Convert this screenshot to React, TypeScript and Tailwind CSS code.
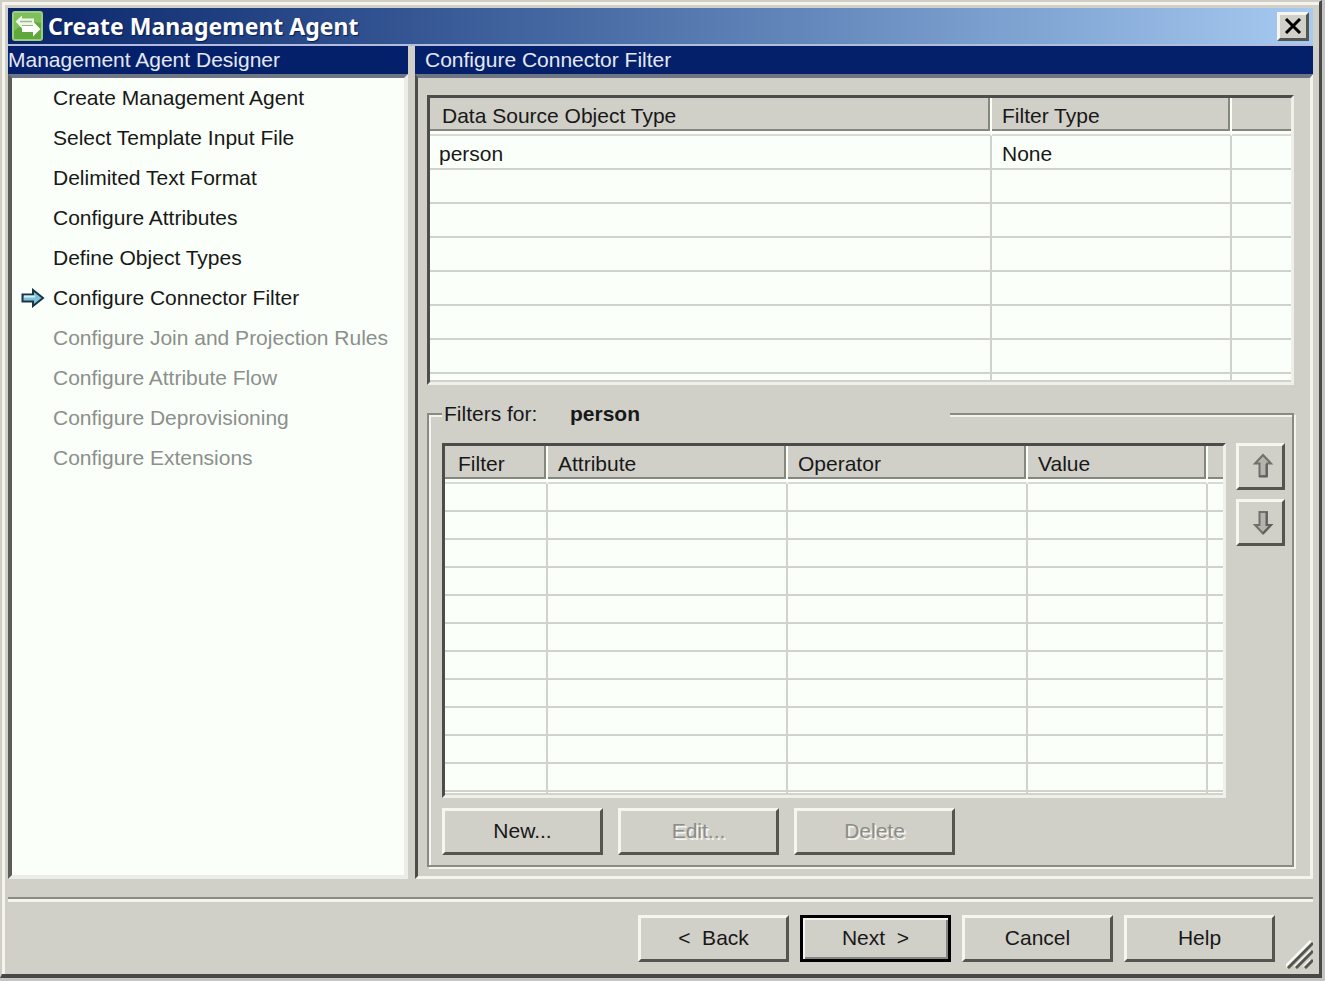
import React from 'react';
import clsx from 'clsx';

const steps = [
  { label: 'Create Management Agent' },
  { label: 'Select Template Input File' },
  { label: 'Delimited Text Format' },
  { label: 'Configure Attributes' },
  { label: 'Define Object Types' },
  { label: 'Configure Connector Filter', current: true },
  { label: 'Configure Join and Projection Rules', pending: true },
  { label: 'Configure Attribute Flow', pending: true },
  { label: 'Configure Deprovisioning', pending: true },
  { label: 'Configure Extensions', pending: true },
];

const raised = 'border-[3px] border-t-[#f6f6f0] border-l-[#f6f6f0] border-r-[#55554f] border-b-[#55554f] bg-[#d0cfc8]';
const sunken = 'border-[3px] border-t-[#4c4c4a] border-l-[#4c4c4a] border-r-[#f0f0ea] border-b-[#f0f0ea]';

const WinButton: React.FC<React.ButtonHTMLAttributes<HTMLButtonElement>> = ({ className, disabled, ...props }) => (
  <button
    type="button"
    disabled={disabled}
    className={clsx(
      'flex h-[47px] items-center justify-center whitespace-pre pb-[2px]',
      disabled && 'text-[#8e8d88] [text-shadow:2px_2px_0_#f4f4ee]',
      className,
    )}
    {...props}
  />
);

const HeaderCell: React.FC<{ children?: React.ReactNode; className?: string }> = ({ children, className }) => (
  <th
    scope="col"
    className={clsx(
      'border-b-2 border-r-2 border-b-[#d8dad4] border-r-[#fafff8] bg-[#d0cfc8] p-0 text-left font-normal last:border-r-0',
      'shadow-[inset_0_-3px_0_#fafff8,inset_-2px_-5px_0_#868680] last:shadow-[inset_0_-3px_0_#fafff8,inset_0_-5px_0_#868680]',
      className,
    )}
  >
    {children}
  </th>
);

const Cell: React.FC<{ children?: React.ReactNode; className?: string }> = ({ children, className }) => (
  <td className={clsx('border-b-2 border-r-2 border-[#d0d2cc] p-0 last:border-r-0', className)}>{children}</td>
);

const TitleBar: React.FC = () => (
  <header className="flex h-9 items-center bg-linear-to-r from-[#0a246a] to-[#a6caf0] px-1">
    <svg className="h-[30px] w-[31px] shrink-0" viewBox="0 0 31 30" aria-hidden="true">
      <rect x="1" y="1" width="29" height="28" rx="2" fill="#5fa83c" stroke="#9ccf7c" strokeWidth="2" />
      <path d="M2 2h27v10Q15 9 2 20z" fill="#8cc868" opacity=".7" />
      <path d="M3.500 10.500L10 4.500v3h12v7H10v3z" fill="#eef6e6" />
      <path d="M28.500 18L21 10.500v4H10V21h11v4.500z" fill="#fff" />
      <path d="M8 10.500h12" stroke="#a4b49a" strokeWidth="1.500" />
      <path d="M10 14.500h11" stroke="#8fb87a" strokeWidth="1" />
    </svg>
    <h1 className="ml-[5px] flex-1 font-['Noto_Sans',sans-serif] text-[23px] leading-8 font-bold text-white [text-shadow:1px_1px_1px_#0a1c50]">
      Create Management Agent
    </h1>
    <button type="button" aria-label="Close" className={clsx(raised, 'flex h-[29px] w-8 items-center justify-center')}>
      <svg className="h-4 w-[18px]" viewBox="0 0 18 16" aria-hidden="true">
        <path d="M2 1l14 14M16 1L2 15" stroke="#000" strokeWidth="3" />
      </svg>
    </button>
  </header>
);

const StepList: React.FC = () => (
  <nav className="flex w-[400px] shrink-0 flex-col">
    <h2 className="h-7 bg-[#04206a] leading-7 text-[#e4e8f4]">Management Agent Designer</h2>
    <ol className="flex-1 border-4 border-t-[#6e7684] border-r-[#ecece8] border-b-[#ecece8] border-l-[#5c5c5a] bg-[#fafff9]">
      {steps.map((step) => (
        <li
          key={step.label}
          aria-current={step.current ? 'step' : undefined}
          className={clsx('flex h-10 items-center pl-[9px]', step.pending && 'text-[#8c8f8c]')}
        >
          <span className="w-8 shrink-0">
            {step.current && (
              <svg className="h-5 w-6" viewBox="0 0 24 20" aria-hidden="true">
                <path d="M1.500 6.500H12V2l10 8-10 8v-4.500H1.500z" fill="#7cc4dc" stroke="#1c3444" strokeWidth="2" />
                <path d="M3 8.500h11" stroke="#d4f0f8" strokeWidth="2" />
              </svg>
            )}
          </span>
          {step.label}
        </li>
      ))}
    </ol>
  </nav>
);

const ObjectTypeTable: React.FC = () => (
  <div className={clsx(sunken, 'bg-[#fafff9]')}>
    <table className="w-full table-fixed border-separate border-spacing-0">
      <colgroup>
        <col className="w-[562px]" />
        <col className="w-[240px]" />
        <col />
      </colgroup>
      <thead>
        <tr className="h-[38px]">
          <HeaderCell className="pl-3">Data Source Object Type</HeaderCell>
          <HeaderCell className="pl-[10px]">Filter Type</HeaderCell>
          <HeaderCell />
        </tr>
      </thead>
      <tbody>
        <tr className="h-[34px]">
          <Cell className="pt-[3px] pl-[9px]">person</Cell>
          <Cell className="pt-[3px] pl-[10px]">None</Cell>
          <Cell />
        </tr>
        {Array.from({ length: 6 }, (_, i) => (
          <tr key={i} className="h-[34px]">
            <Cell />
            <Cell />
            <Cell />
          </tr>
        ))}
        <tr className="h-2">
          <Cell />
          <Cell />
          <Cell />
        </tr>
      </tbody>
    </table>
  </div>
);

const FilterTable: React.FC = () => (
  <div className={clsx(sunken, 'min-w-0 flex-1 bg-[#fafff9]')}>
    <table className="w-full table-fixed border-separate border-spacing-0">
      <colgroup>
        <col className="w-[103px]" />
        <col className="w-[240px]" />
        <col className="w-[240px]" />
        <col className="w-[180px]" />
        <col />
      </colgroup>
      <thead>
        <tr className="h-[38px]">
          <HeaderCell className="pl-[13px]">Filter</HeaderCell>
          <HeaderCell className="pl-[10px]">Attribute</HeaderCell>
          <HeaderCell className="pl-[10px]">Operator</HeaderCell>
          <HeaderCell className="pl-[10px]">Value</HeaderCell>
          <HeaderCell />
        </tr>
      </thead>
      <tbody>
        {Array.from({ length: 11 }, (_, i) => (
          <tr key={i} className="h-7">
            <Cell />
            <Cell />
            <Cell />
            <Cell />
            <Cell />
          </tr>
        ))}
        <tr className="h-[3px]">
          <Cell />
          <Cell />
          <Cell />
          <Cell />
          <Cell />
        </tr>
      </tbody>
    </table>
  </div>
);

const ArrowIcon: React.FC = () => (
  <svg className="h-[26px] w-[22px]" viewBox="0 0 22 26" aria-hidden="true">
    <path d="M11 2l8 8.500h-4V23H7.500V10.500H3z" fill="#b4b4ae" stroke="#70706c" strokeWidth="2" />
    <path d="M14.500 11v12.500H7" fill="none" stroke="#60605c" strokeWidth="2" />
  </svg>
);

const ArrowDownIcon: React.FC = () => (
  <svg className="h-[26px] w-[22px]" viewBox="0 0 22 26" aria-hidden="true">
    <path d="M11 24.500L3 16h4.500V3H15v13h4z" fill="#b4b4ae" stroke="#70706c" strokeWidth="2" />
    <path d="M14.500 3v13h4.500l-8 8.500" fill="none" stroke="#60605c" strokeWidth="2" />
  </svg>
);

const FilterPanel: React.FC = () => (
  <div className="flex min-w-0 flex-1 flex-col">
    <h2 className="h-7 bg-[#04206a] pl-[10px] leading-7 text-[#e4e8f4]">Configure Connector Filter</h2>
    <div className="flex-1 border-[3px] border-t-4 border-t-[#6e7684] border-r-[#f4f4ee] border-b-[#f4f4ee] border-l-[#4c4c4a] pt-[17px] pr-4 pb-2 pl-[9px]">
      <ObjectTypeTable />
      <fieldset className="mt-[14px] border-2 border-[#8a8a84] px-[13px] pb-[10px] shadow-[2px_2px_0_#f4f4ee,inset_2px_2px_0_#f4f4ee]">
        <legend className="w-[508px] bg-[#d0cfc8] pl-[2px]">
          <div className="flex h-[30px] items-center">
            <span className="w-[126px]">Filters for:</span>
            <b>person</b>
          </div>
        </legend>
        <div className="mt-[14px] flex items-start gap-[10px]">
          <FilterTable />
          <div className="-mr-[6px] flex flex-col gap-[9px]">
            <WinButton disabled aria-label="Move up" className={clsx(raised, 'w-[49px] pl-1')}>
              <ArrowIcon />
            </WinButton>
            <WinButton disabled aria-label="Move down" className={clsx(raised, 'w-[49px] pl-1')}>
              <ArrowDownIcon />
            </WinButton>
          </div>
        </div>
        <div className="mt-[10px] flex gap-[15px]">
          <WinButton className={clsx(raised, 'w-[161px]')}>New...</WinButton>
          <WinButton disabled className={clsx(raised, 'w-[161px]')}>Edit...</WinButton>
          <WinButton disabled className={clsx(raised, 'w-[161px]')}>Delete</WinButton>
        </div>
      </fieldset>
    </div>
  </div>
);

const Footer: React.FC = () => (
  <footer className="mt-[18px] border-t-2 border-[#8a8a84] shadow-[inset_0_3px_0_#f4f4ee]">
    <div className="flex items-start justify-end gap-[11px] pt-4">
      <WinButton className={clsx(raised, 'w-[151px]')}>{'<  Back'}</WinButton>
      <WinButton className="w-[151px] border-[3px] border-black bg-[#d0cfc8] shadow-[inset_2px_2px_0_#f4f4ee,inset_-2px_-2px_0_#868680]">
        {'Next  >'}
      </WinButton>
      <WinButton className={clsx(raised, 'w-[151px]')}>Cancel</WinButton>
      <WinButton className={clsx(raised, 'w-[151px]')}>Help</WinButton>
      <svg className="mt-6 h-[30px] w-[27px]" viewBox="0 0 27 30" aria-hidden="true">
        <path d="M-1 28L25 2M9 28L25 12M18 28l7-7" stroke="#f8f8f2" strokeWidth="3" />
        <path d="M2 29L27 4M10 29l17-17M19 29l8-8" stroke="#55554f" strokeWidth="3" />
      </svg>
    </div>
  </footer>
);

const App: React.FC = () => (
  <div className="flex min-h-screen min-w-[1200px] flex-col bg-[#c4c4c2] pr-[3px] pb-[3px] font-['Liberation_Sans',Arial,sans-serif] text-[21px] leading-6 text-[#181818]">
    <div className="flex flex-1 flex-col border-t-2 border-r-[3px] border-b-4 border-l-2 border-t-[#d0cdc4] border-r-[#484846] border-b-[#484846] border-l-[#d0cdc4] bg-[#d0cfc8]">
      <div className="flex flex-1 flex-col border-t-[3px] border-l-[3px] border-[#f4f3ec] pt-[3px] pr-[6px] pb-[5px] pl-[3px]">
        <TitleBar />
        <main className="flex flex-1 gap-[7px] border-t-2 border-[#b4bedc]">
          <StepList />
          <FilterPanel />
        </main>
        <Footer />
      </div>
    </div>
  </div>
);

export default App;
